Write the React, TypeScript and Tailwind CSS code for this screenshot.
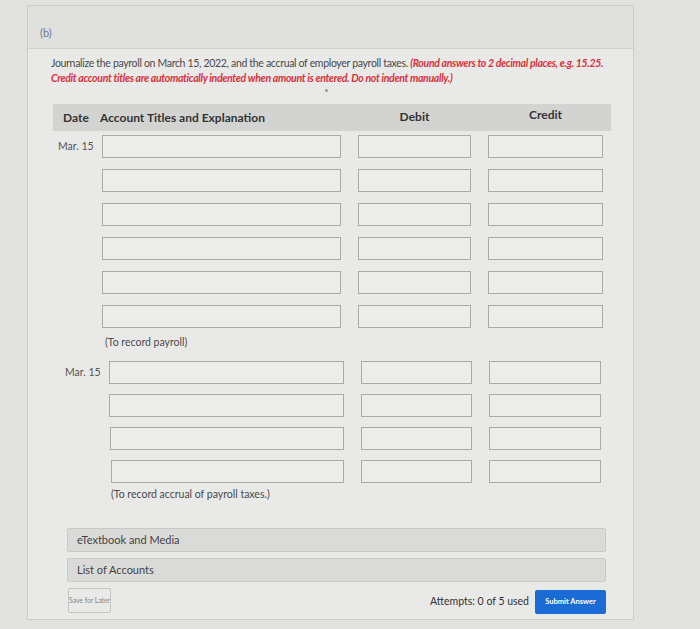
import React from 'react';

const Input: React.FC<{ w: string }> = ({ w }) => (
  <div className={`${w} h-[23px] border border-[#a9a9a7] bg-[#ecece9]`} />
);

type RowProps = {
  date?: string;
  dateW?: string;
  dateClass?: string;
  accW?: string;
  debW?: string;
  creW?: string;
};

const EntryRow: React.FC<RowProps> = ({
  date,
  dateW = 'w-[49px]',
  dateClass = 'pl-[5px]',
  accW = 'w-[239px]',
  debW = 'w-[113px]',
  creW = 'w-[115px]',
}) => (
  <div className="flex items-center h-[23px]">
    <div className={`${dateW} ${dateClass} text-[10.5px] text-[#555]`}>{date}</div>
    <Input w={accW} />
    <div className="w-[17px]" />
    <Input w={debW} />
    <div className="w-[17px]" />
    <Input w={creW} />
  </div>
);

const App: React.FC = () => {
  return (
    <div className="w-[700px] h-[629px] overflow-hidden bg-[#e1e1df] pt-[5px] pl-[27px] font-[Lato,sans-serif]">
      <div className="w-[607px] h-[615px] border border-[#cdcdcb] bg-[#e9e9e7]">
        {/* part header */}
        <div className="h-[43px] bg-[#e0e0de] border-b border-[#d0d0ce] pl-[12px] pt-[20px] text-[11px] leading-[14px] text-[#6b7b92]">
          (b)
        </div>

        <div className="pl-[23px] pt-[7px]">
          <p className="text-[10.5px] leading-[15px] text-[#4a4a4a] whitespace-nowrap tracking-[-0.32px]">
            Journalize the payroll on March 15, 2022, and the accrual of employer payroll taxes.{' '}
            <span className="text-[#d8323c] font-bold italic">(Round answers to 2 decimal places, e.g. 15.25.</span>
            <br />
            <span className="text-[#d8323c] font-bold italic">
              Credit account titles are automatically indented when amount is entered. Do not indent manually.)
            </span>
          </p>
          <div className="flex justify-center w-[558px] h-[5px] mt-[3px]">
            <div className="w-[3px] h-[3px] rounded-full bg-[#9a9a98] ml-[-8px]" />
          </div>

          {/* journal table */}
          <div className="ml-[2px] mt-[10px]">
            <div className="flex items-center w-[558px] h-[27px] bg-[#d3d3d1] text-[12px] font-bold text-[#333]">
              <div className="w-[47px] pl-[10px]">Date</div>
              <div className="w-[258px]">Account Titles and Explanation</div>
              <div className="w-[113px] text-center -mt-[2px]">Debit</div>
              <div className="w-[17px]" />
              <div className="w-[115px] text-center -mt-[5px]">Credit</div>
            </div>

            <div className="mt-[4px] flex flex-col gap-[11px]">
              <EntryRow date="Mar. 15" />
              <EntryRow />
              <EntryRow />
              <EntryRow />
              <EntryRow />
              <EntryRow />
            </div>
            <p className="mt-[7px] ml-[52px] text-[10.5px] leading-[15px] text-[#4a4a4a]">(To record payroll)</p>

            <div className="mt-[11px] flex flex-col gap-[10px]">
              <EntryRow date="Mar. 15" dateW="w-[56px]" dateClass="pl-[12px]" accW="w-[235px]" debW="w-[111px]" creW="w-[112px]" />
              <EntryRow dateW="w-[56px]" accW="w-[235px]" debW="w-[111px]" creW="w-[112px]" />
              <EntryRow dateW="w-[57px]" accW="w-[234px]" debW="w-[111px]" creW="w-[112px]" />
              <EntryRow dateW="w-[58px]" accW="w-[233px]" debW="w-[111px]" creW="w-[112px]" />
            </div>
            <p className="mt-[4px] ml-[58px] text-[10.5px] leading-[15px] text-[#4a4a4a]">
              (To record accrual of payroll taxes.)
            </p>
          </div>

          {/* resources */}
          <div className="ml-[16px] mt-[26px] w-[539px] flex flex-col gap-[6px]">
            <div className="h-[24px] bg-[#dadad8] border border-[#c9c9c7] rounded-[2px] flex items-center pl-[9px] text-[11px] text-[#444]">
              eTextbook and Media
            </div>
            <div className="h-[24px] bg-[#dadad8] border border-[#c9c9c7] rounded-[2px] flex items-center pl-[9px] text-[11px] text-[#444]">
              List of Accounts
            </div>
          </div>

          <div className="ml-[17px] mt-[5px] w-[538px] flex items-center">
            <button className="w-[43px] h-[25px] border border-[#c4c4c2] rounded-[2px] text-[7px] tracking-[-0.1px] whitespace-nowrap text-[#8a8a88] bg-[#e9e9e7]">
              Save for Later
            </button>
            <div className="flex-1" />
            <span className="text-[10.5px] text-[#333] mt-[2px]">Attempts: 0 of 5 used</span>
            <button className="ml-[6px] mt-[3px] w-[71px] h-[24px] rounded-[2px] bg-[#1b6bd6] text-white text-[7.5px] font-bold whitespace-nowrap">
              Submit Answer
            </button>
          </div>
        </div>
      </div>
    </div>
  );
};

export default App;
